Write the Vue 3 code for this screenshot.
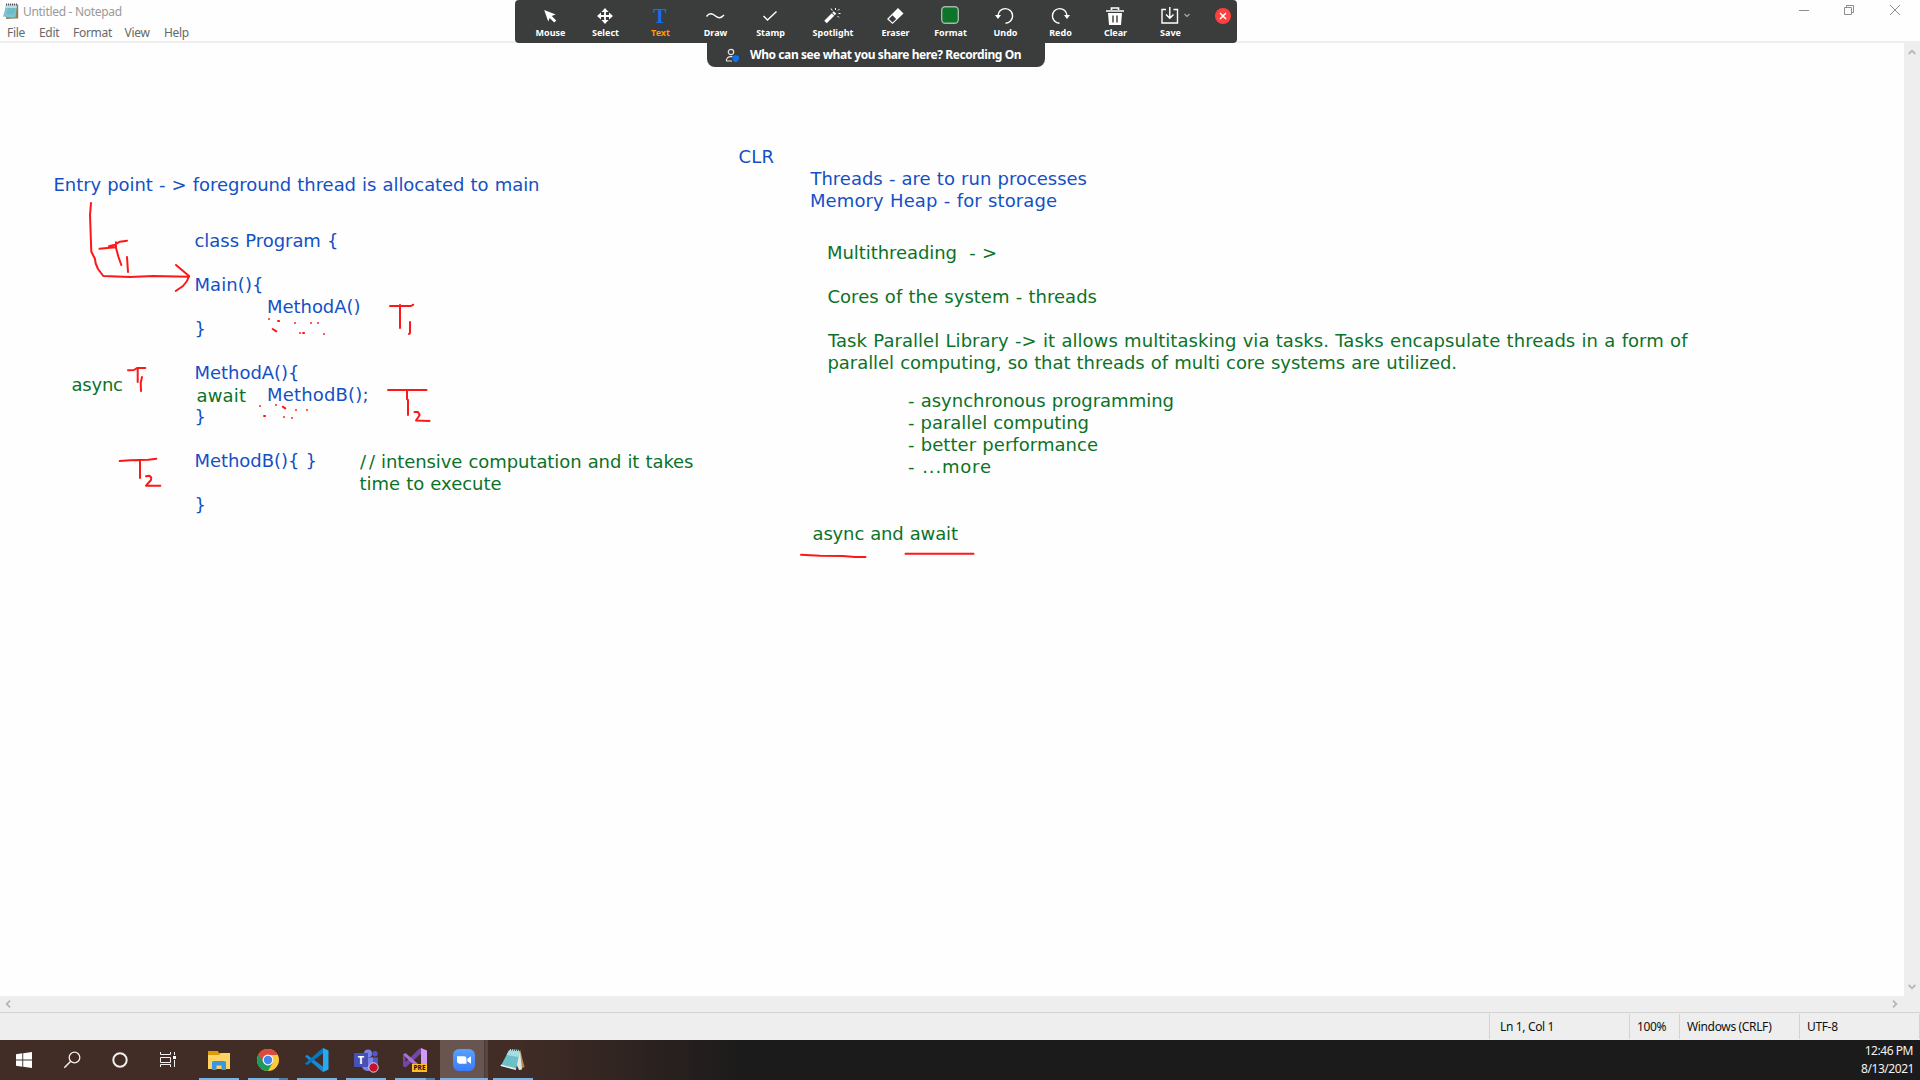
<script setup>
const menus = [
  { label: 'File', w: 32 },
  { label: 'Edit', w: 34 },
  { label: 'Format', w: 51.5 },
  { label: 'View', w: 39.5 },
  { label: 'Help', w: 40 },
]

const tools = ['Mouse', 'Select', 'Text', 'Draw', 'Stamp', 'Spotlight', 'Eraser', 'Format', 'Undo', 'Redo', 'Clear', 'Save']

const status = [
  { label: 'Ln 1, Col 1', w: 140, pad: 10 },
  { label: '100%', w: 50, pad: 7 },
  { label: 'Windows (CRLF)', w: 120, pad: 7 },
  { label: 'UTF-8', w: 120, pad: 7 },
]

// x, baseline, advance width, colour class, text
const notes = [
  [53.5, 191, 486, 'blue', 'Entry point - > foreground thread is allocated to main'],
  [194.5, 247, 144, 'blue', 'class Program {'],
  [194.5, 291, 69, 'blue', 'Main(){'],
  [267, 313, 93.5, 'blue', 'MethodA()'],
  [194.5, 335, 11.5, 'blue', '}'],
  [194.5, 379, 105, 'blue', 'MethodA(){'],
  [196.5, 402, 49.5, 'green', 'await'],
  [267, 401, 101.5, 'blue', 'MethodB();'],
  [194.5, 423, 11.5, 'blue', '}'],
  [194.5, 467, 122.5, 'blue', 'MethodB(){ }'],
  [194.5, 511, 11.5, 'blue', '}'],
  [71.5, 391, 51.5, 'green', 'async'],
  [360, 468, 15, 'green', '//'],
  [381, 468, 312.5, 'green', 'intensive computation and it takes'],
  [359.5, 490, 142, 'green', 'time to execute'],
  [738.5, 163, 35.5, 'blue', 'CLR'],
  [810.5, 185, 276.5, 'blue', 'Threads - are to run processes'],
  [810, 207, 247, 'blue', 'Memory Heap - for storage'],
  [827, 259, 170, 'green', 'Multithreading\u00a0 - >'],
  [827.5, 303, 269.5, 'green', 'Cores of the system - threads'],
  [828, 347, 859.5, 'green', 'Task Parallel Library -> it allows multitasking via tasks. Tasks encapsulate threads in a form of'],
  [827.5, 369, 629.5, 'green', 'parallel computing, so that threads of multi core systems are utilized.'],
  [908, 407, 266, 'green', '- asynchronous programming'],
  [908, 429, 181, 'green', '- parallel computing'],
  [908, 451, 190, 'green', '- better performance'],
  [908, 473, 83, 'green', '- ...more'],
  [812.5, 540, 145.5, 'green', 'async and await'],
]

const strokes = [
  'M91 203L90 215L91.3 251.5L95 259L95.7 263.5L98 269L103.3 276L130 277L153 276L189 276.7',
  'M176 265L189 276L187 281L183 286L175.7 291',
  'M99.5 248.7L115 247.3M109 246.3L114 245L120 241.7L127 240.7M116 242.3L116 248L118.5 257L121.3 265M127 257L128 272',
  'M128 370.3L134 370L137 368L145.3 368M137.7 368V382M142 377L140.7 383L141 391',
  'M119.7 461L130 460.2L148.3 459.7L156.3 458.7M140 460V478M146 476.3L149.3 475.7L151.3 477.5L151 480L146 485.7H160.3',
  'M390 306H411L413.3 304.7M400 305V328M410 322V333L409 334',
  'M388 390H426.5M407 390V399L408 400V415M414.5 412H418L419.7 415L416 420.5L429.5 421',
  'M801 554.7L820 555.7L843 556L855 557H865.5M905.5 553.7H973.5',
  'M272.7 329L276.3 331.3M282.7 406.7L285.3 408.3',
]

const dots = [
  [269, 319], [278.3, 321, 1], [295, 323], [311, 323], [318, 323], [300, 333], [303.3, 333, 1], [324, 334],
  [260, 406], [276, 405], [296, 410], [307, 410], [264.3, 416, 1], [284, 417], [292, 418],
]
</script>

<template>
  <div class="screen">
    <header class="top">
      <div class="titlebar">
        <svg class="appicon" width="16" height="17" viewBox="0 0 16 17">
          <path d="M3 1.5H15.2V15.5H13L3 16Z" fill="#8d7f5c" />
          <path d="M3 1.5H14L12.5 14.5Q6 15 0 13.6Q2 8 3 1.5Z" fill="#7cc4d2" />
          <path d="M3 1.5H14L13.5 5H2.4Z" fill="#b9dfe6" />
          <path d="M5 6H12M4.5 8H12M4 10H11.5" stroke="#5baabd" stroke-width=".7" />
          <path d="M3.5 .5V2.5M5.5 .5V2.5M7.5 .5V2.5M9.5 .5V2.5M11.5 .5V2.5M13.5 .5V2.5" stroke="#555" />
        </svg>
        <span class="title">Untitled - Notepad</span>
        <svg class="wincontrols" width="103" height="12" viewBox="0 0 103 12" fill="none" stroke="#8e8e8e">
          <path d="M0 6.5H10" />
          <path d="M45.500 3.500H52.500V10.500H45.500ZM47.500 3V1.500H54.500V8.500H53" />
          <path d="M91 1L101 11M101 1L91 11" />
        </svg>
      </div>
      <nav class="menubar">
        <span v-for="m in menus" :key="m.label" :style="{ width: m.w + 'px' }">{{ m.label }}</span>
      </nav>
    </header>

    <main class="editor">
      <div class="page"></div>
      <div class="vscroll">
        <svg width="8" height="6" viewBox="0 0 8 6"><path d="M.7 5L4 1.700L7.300 5" /></svg>
        <svg width="8" height="6" viewBox="0 0 8 6"><path d="M.7 1L4 4.300L7.300 1" /></svg>
      </div>
    </main>
    <div class="hscroll">
      <svg width="6" height="8" viewBox="0 0 6 8"><path d="M5 .7L1.700 4L5 7.300" /></svg>
      <svg width="6" height="8" viewBox="0 0 6 8"><path d="M1 .7L4.300 4L1 7.300" /></svg>
    </div>
    <footer class="status">
      <span v-for="s in status" :key="s.label" :style="{ width: s.w + 'px', paddingLeft: s.pad + 'px' }">{{ s.label }}</span>
    </footer>

    <div class="taskbar">
      <div class="sys">
        <svg viewBox="0 0 48 40"><path d="M16 14.200L22.300 13.300V19.500H16ZM23.200 13.200L32 12V19.500H23.200ZM16 20.400H22.300V26.700L16 25.800ZM23.200 20.400H32V28L23.200 26.800Z" fill="#fff" /></svg>
      </div>
      <div class="sys">
        <svg viewBox="0 0 48 40" fill="none" stroke="#f3f0ef"><circle cx="26.500" cy="17.500" r="5.300" stroke-width="1.300" /><path d="M22.700 21.300L16.300 27.700" stroke-width="1.500" /></svg>
      </div>
      <div class="sys">
        <svg viewBox="0 0 48 40"><circle cx="24" cy="20" r="6.700" fill="none" stroke="#f3f0ef" stroke-width="2" /></svg>
      </div>
      <div class="sys">
        <svg viewBox="0 0 48 40" fill="none" stroke="#f3f0ef"><path d="M16.500 12V14.500H26.500V12M16.500 17.500H26.500V22.500H16.500ZM16.500 27V24.500H26.500V27M30.500 12V15M30.500 20V27" /><path d="M29 16H32V19H29Z" fill="#fff" stroke="none" /></svg>
      </div>

      <div class="app">
        <svg viewBox="0 0 49 40">
          <path d="M13 11H23L24 13H35V29H13Z" fill="#e09a08" /><path d="M13 15H24L26 13H35V29H13Z" fill="#ffd463" />
          <path d="M17 22.500Q17 21 18.500 21H29.500Q31 21 31 22.500V30H26.500V25.500H21.500V30H17Z" fill="#3a96e0" />
        </svg>
        <i class="run"></i>
      </div>
      <div class="app">
        <svg viewBox="0 0 49 40">
          <circle cx="24" cy="20" r="11" fill="#ffca3a" />
          <path d="M24 20L14.500 14.500A11 11 0 0 0 24 31L28.500 23Z" fill="#179d5b" />
          <path d="M24 15H33.800A11 11 0 0 0 14.500 14.500L19.500 22.500A5 5 0 0 1 24 15Z" fill="#dc4a3d" />
          <circle cx="24" cy="20" r="5.400" fill="#f4f4f4" /><circle cx="24" cy="20" r="4.200" fill="#4285f4" />
        </svg>
        <i class="run multi"></i>
      </div>
      <div class="app">
        <svg viewBox="0 0 49 40">
          <path d="M12 16.500L14 14.800L30.500 27V32L28.500 31Z" fill="#168bd2" />
          <path d="M12 23.500L14 25.200L30.500 13V8L28.500 9Z" fill="#0a76bd" />
          <path d="M30 8L35.500 10.500V29.500L30 32Z" fill="#29a9ef" />
        </svg>
        <i class="run"></i>
      </div>
      <div class="app">
        <svg viewBox="0 0 49 40">
          <circle cx="26" cy="13.500" r="4" fill="#7b83eb" /><circle cx="33" cy="13.800" r="2.700" fill="#5059c9" />
          <path d="M28 17.500H36V24Q35 28 30 28Z" fill="#5059c9" /><path d="M20 17.500H31V25Q30 31 25 31Q20 30 19.500 25Z" fill="#7b83eb" />
          <rect x="12" y="13" width="14" height="14" fill="#4650b7" />
          <text x="19" y="24" text-anchor="middle" font-size="11" font-weight="700" fill="#fff">T</text>
          <circle cx="31.500" cy="27.500" r="4.700" fill="#c81030" stroke="#eee4e8" stroke-width=".9" />
        </svg>
        <i class="run"></i>
      </div>
      <div class="app">
        <svg viewBox="0 0 49 40">
          <path d="M12 14.500V26L14.500 27.500L30 13.500V8L28 9L14.500 22V17Z" fill="#7546a8" />
          <path d="M12 14.500L14.500 13L30 26.500V32Z" fill="#a872d9" />
          <path d="M30 8L36 10.500V30L30 32Z" fill="#cf9cf5" />
          <rect x="21" y="24" width="15" height="8" fill="#ffbe28" />
          <text x="28.500" y="30.300" text-anchor="middle" font-size="6.500" font-weight="800" fill="#231b0b" textLength="12">PRE</text>
        </svg>
        <i class="run multi"></i>
      </div>
      <div class="app active">
        <svg viewBox="0 0 49 40">
          <defs><linearGradient id="zm" x2="0" y2="1"><stop stop-color="#58a0ff" /><stop offset="1" stop-color="#397dfa" /></linearGradient></defs>
          <rect x="13" y="9" width="22" height="22" rx="6" fill="url(#zm)" />
          <path d="M17 16.300H24Q26.500 16.300 26.500 18.700V23.700H19.500Q17 23.700 17 21.300ZM27.300 18.700L31 16.300V23.700L27.300 21.300Z" fill="#fff" />
        </svg>
        <i class="run"></i>
      </div>
      <div class="app">
        <svg viewBox="0 0 49 40">
          <path d="M31 9.500L35.500 27L31 29Z" fill="#b78b45" />
          <path d="M20.500 9L31 10L33 29.500L30 30Z" fill="#e0e6e4" />
          <path d="M20.500 9.500L31 10.500L27 29.500L12 25.500Z" fill="#6ec0c7" />
          <path d="M20.500 9.500L31 10.500L29.500 17L17.500 15Z" fill="#a8dde0" />
          <path d="M12 24.500L27 28.500L26.800 30L11.500 26Z" fill="#e9f2f2" />
          <path d="M20 9.500L31 10.500" stroke="#38413f" stroke-width="1.500" stroke-dasharray="1 1" />
        </svg>
        <i class="run"></i>
      </div>
      <div class="clock"><span>12:46 PM</span><span class="date">8/13/2021</span></div>
    </div>

    <svg class="canvas" width="1920" height="1080" viewBox="0 0 1920 1080">
      <text v-for="(n, i) in notes" :key="i" :x="n[0]" :y="n[1]" :textLength="n[2]" :class="n[3]">{{ n[4] }}</text>
      <path v-for="(s, i) in strokes" :key="'s' + i" :d="s" class="ink" />
      <rect v-for="(d, i) in dots" :key="'d' + i" :x="d[0] - 1" :y="d[1] - 1" :width="d[2] ? 2.500 : 2" height="2" :fill="d[2] ? '#ff1515' : '#ff5c5c'" />
    </svg>

    <div class="zoom">
      <div class="tools">
        <div v-for="t in tools" :key="t" class="tool" :class="{ wide: t === 'Spotlight', on: t === 'Text' }">
          <svg width="40" height="28" viewBox="0 0 40 28" fill="none" stroke="#fff" stroke-width="1.400">
            <path v-if="t === 'Mouse'" d="M14.200 10L25.700 14.500L21.700 16L26.200 20.500L24.200 22.500L19.700 18L18.200 21.500Z" fill="#fff" stroke="none" />
            <g v-else-if="t === 'Select'">
              <path d="M14 16H26M20 10V22" stroke-width="1.800" />
              <path d="M20 8L23.500 12H16.500ZM20 24L23.500 20H16.500ZM12 16L16 12.500V19.500ZM28 16L24 12.500V19.500Z" fill="#fff" stroke="none" />
            </g>
            <text v-else-if="t === 'Text'" x="20" y="23" class="glyph" text-anchor="middle" textLength="14">T</text>
            <path v-else-if="t === 'Draw'" d="M11.500 16.500C14.500 12.500 17.500 13.500 20.500 16C23.500 18.500 26 18.500 29 15" />
            <path v-else-if="t === 'Stamp'" d="M13.500 16L17.500 20L26.500 11.500" />
            <g v-else-if="t === 'Spotlight'">
              <path d="M13.500 22L21 14.500" stroke-width="3.500" /><path d="M21.500 14L23 12.500" stroke-width="3.500" />
              <path d="M19 8.500L20.300 10.500M23.500 8V10M27.500 9L26 10.500M26.500 13.500H28.500M25.500 16L27 17.500" stroke-width="1" />
            </g>
            <g v-else-if="t === 'Eraser'">
              <path d="M12 19L23 8L28.500 13.500L17.500 24Z" fill="#fff" stroke="none" /><path d="M13.800 19L17.500 15.300L21.200 19L17.500 22.500Z" fill="#3b3c3c" stroke="none" />
            </g>
            <rect v-else-if="t === 'Format'" x="11.700" y="6.700" width="16.600" height="16.600" rx="3.500" fill="#0c7529" stroke="#a7b5aa" />
            <g v-else-if="t === 'Undo'"><path d="M13 15.500A7.300 7.300 0 1 1 20.500 23.200" /><path d="M10 15H16L13 19Z" fill="#fff" stroke="none" /></g>
            <g v-else-if="t === 'Redo'"><path d="M27 15.500A7.300 7.300 0 1 0 19.500 23.200" /><path d="M24 15H30L27 19Z" fill="#fff" stroke="none" /></g>
            <g v-else-if="t === 'Clear'">
              <path d="M16.500 10V8H23.500V10M11 11H29" stroke-width="1.700" /><path d="M13 13H27L26 25H14Z" fill="#fff" stroke="none" /><path d="M18 15.500V22.500M22 15.500V22.500" stroke="#3b3c3c" />
            </g>
            <g v-else><path d="M16 9.500H12V23H27.500V9.500H23.500M19.800 7V18M16 14.500L19.800 18.300L23.500 14.500" /><path d="M34.500 14L37 16.500L39.500 14" stroke="#aaa" stroke-width="1.200" /></g>
          </svg>
          <span>{{ t }}</span>
        </div>
        <svg class="close" width="16" height="16" viewBox="0 0 16 16"><circle cx="8" cy="8" r="8" fill="#ff4040" /><path d="M5 5L11 11M11 5L5 11" stroke="#fff" stroke-width="1.600" /></svg>
      </div>
      <div class="share">
        <svg width="15" height="15" viewBox="0 0 15 15" fill="none" stroke="#e5e5e5" stroke-width="1.200">
          <circle cx="6" cy="4" r="2.700" /><path d="M7 13H1.500C1 10.500 3 8.700 6 8.700H7.500" />
          <path d="M7.500 8.300L10.500 7L14 8.300V11Q13.500 13.500 10.700 14.500Q7.800 13.500 7.500 11Z" fill="#0e72ed" stroke="none" />
        </svg>
        <span>Who can see what you share here? Recording On</span>
      </div>
    </div>
  </div>
</template>

<style>
body { margin: 0; overflow: hidden; }
</style>

<style scoped>
.screen { position: relative; width: 1920px; height: 1080px; display: flex; flex-direction: column; background: #fefefe; font-family: "Noto Sans", "Open Sans", sans-serif; font-size: 12px; overflow: hidden; }
svg { display: block; flex: none; }
.top { height: 41px; border-bottom: 2px solid #eee; }
.titlebar { box-sizing: border-box; height: 24px; display: flex; align-items: flex-start; padding: 3px 18px 0 3px; color: #999; }
.title { margin-left: 4px; line-height: 18px; letter-spacing: -.3px; }
.wincontrols { margin: 1px 0 0 auto; }
.menubar { display: flex; padding-left: 7px; color: #686868; line-height: 18px; letter-spacing: -.3px; }
.menubar span { white-space: nowrap; }
.editor { flex: 1; display: flex; }
.page { flex: 1; }
.vscroll { width: 16px; background: #eee; display: flex; flex-direction: column; justify-content: space-between; align-items: center; padding: 6px 0 6px; box-sizing: border-box; }
.vscroll path, .hscroll path { fill: none; stroke: #b5b5b5; stroke-width: 1.8; }
.hscroll { height: 16px; background: #eee; display: flex; justify-content: space-between; align-items: center; padding: 0 22px 0 5px; }
.status { height: 27px; border-top: 1px solid #d3d3d3; background: #eee; display: flex; justify-content: flex-end; align-items: center; color: #111; }
.status span { box-sizing: border-box; height: 25px; line-height: 25px; border-left: 1px solid #d3d3d3; letter-spacing: -.35px; white-space: nowrap; }
.status span:last-child { border-right: 1px solid #d3d3d3; margin-right: 0; flex: 0 0 121px; }
.taskbar { height: 40px; display: flex; background: linear-gradient(90deg, #412c26 0, #412c26 520px, #1c1b1b 740px, #1c1b1b 100%); }
.sys { width: 48px; height: 40px; }
.app { position: relative; width: 49px; height: 40px; }
.sys + .app { margin-left: 3px; }
.app svg { width: 49px; height: 40px; position: relative; }
.app.active { background: linear-gradient(90deg, #68554f 0, #68554f 44px, #412c26 44px, #544640 45px, #544640 48px, transparent 48px); }
.run { position: absolute; left: 4px; bottom: 0; width: 40px; height: 2px; background: #76b4ea; }
.run.multi { background: linear-gradient(90deg, #76b4ea 31px, #527fa5 31px); }
.active .run { left: 0; width: 48px; }
.clock { margin-left: auto; padding: 2px 7px 0 0; color: #f2f2f2; text-align: right; letter-spacing: -.45px; line-height: 18px; display: flex; flex-direction: column; }
.date { margin-right: -1px; }
.canvas { position: absolute; left: 0; top: 0; }
.canvas text { font-family: "DejaVu Sans", sans-serif; font-size: 18px; word-spacing: .5px; white-space: pre; }
.blue { fill: #1450c4; }
.green { fill: #0b7228; }
.ink { fill: none; stroke: #ff1717; stroke-width: 2; stroke-linejoin: round; stroke-linecap: round; }
.zoom { position: absolute; left: 515px; top: 0; width: 722px; color: #fff; font-weight: 700; display: flex; flex-direction: column; }
.tools { height: 43px; padding-left: 8px; background: #3b3c3c; border-radius: 4px; display: flex; }
.tool { width: 55px; display: flex; flex-direction: column; align-items: center; font-size: 9px; }
.tool svg { margin-left: -1.4px; }
.tool.wide { width: 70px; }
.tool span { line-height: 10px; }
.tool.on span { color: #f90; }
.glyph { font: 700 20px "Liberation Serif", serif; fill: #0e72ed; stroke: none; }
.close { margin: 8px 0 0 17px; }
.share { align-self: flex-start; margin-left: 192px; width: 338px; height: 24px; background: #3b3c3c; border-radius: 0 0 8px 8px; display: flex; align-items: center; font-size: 12px; box-sizing: border-box; padding-left: 18px; }
.share span { margin-left: 10px; line-height: 20px; margin-top: -1px; white-space: nowrap; letter-spacing: -.42px; }
</style>
